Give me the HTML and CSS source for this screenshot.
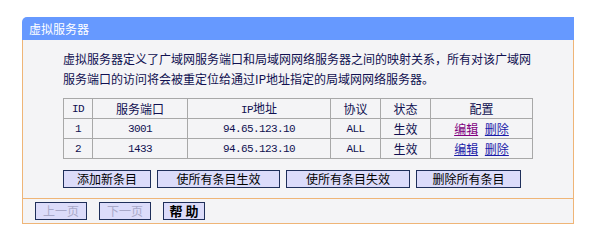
FILE: index.html
```html
<!DOCTYPE html>
<html lang="zh-CN">
<head>
<meta charset="utf-8">
<title>虚拟服务器</title>
<link rel="stylesheet" href="styles.css">
</head>
<body>
<div class="panel">
  <div class="panel-title">虚拟服务器</div>
  <div class="panel-body">
    <p class="intro">虚拟服务器定义了广域网服务端口和局域网网络服务器之间的映射关系，所有对该广域网服务端口的访问将会被重定位给通过IP地址指定的局域网网络服务器。</p>
    <table class="grid">
      <thead>
        <tr>
          <th class="c-id mono">ID</th>
          <th class="c-port">服务端口</th>
          <th class="c-ip"><span class="mono">IP</span>地址</th>
          <th class="c-proto">协议</th>
          <th class="c-state">状态</th>
          <th class="c-cfg">配置</th>
        </tr>
      </thead>
      <tbody>
        <tr>
          <td class="mono">1</td>
          <td class="mono">3001</td>
          <td class="mono">94.65.123.10</td>
          <td class="mono">ALL</td>
          <td>生效</td>
          <td><a class="visited" href="#">编辑</a> <a href="#">删除</a></td>
        </tr>
        <tr>
          <td class="mono">2</td>
          <td class="mono">1433</td>
          <td class="mono">94.65.123.10</td>
          <td class="mono">ALL</td>
          <td>生效</td>
          <td><a href="#">编辑</a> <a href="#">删除</a></td>
        </tr>
      </tbody>
    </table>
    <div class="actions">
      <button class="btn b1">添加新条目</button>
      <button class="btn b2">使所有条目生效</button>
      <button class="btn b3">使所有条目失效</button>
      <button class="btn b4">删除所有条目</button>
    </div>
  </div>
  <div class="panel-foot">
    <button class="btn nav" disabled>上一页</button>
    <button class="btn nav" disabled>下一页</button>
    <button class="btn help">帮 助</button>
  </div>
</div>
</body>
</html>
```

FILE: styles.css
```css
html, body {
  margin: 0;
  padding: 0;
  background: #ffffff;
}
body {
  padding: 17px 0 0 22px;
  font-family: "Noto Sans CJK SC", "Noto Sans", sans-serif;
  font-size: 12px;
  color: #101050;
}
.panel {
  width: 552px;
}
.panel-title {
  height: 23px;
  line-height: 23px;
  background: #6699ff;
  color: #ffffff;
  padding-left: 7px;
  border-top-left-radius: 5px;
  font-size: 12px;
}
.panel-body {
  background: #f4f4f6;
  border: 1px solid #efb577;
  border-top: none;
  padding: 9px 40px 10px 40px;
}
.intro {
  margin: 0;
  line-height: 20px;
  font-size: 12px;
}
.mono {
  font-family: "Liberation Mono", monospace;
  font-size: 11px;
  letter-spacing: -0.6px;
}
.grid {
  margin-top: 9px;
  width: 470px;
  border-collapse: collapse;
  border: 1px solid #8a8a8a;
  table-layout: fixed;
}
.grid tr {
  height: 20px;
}
.grid th, .grid td {
  border: 1px solid #a8a8a8;
  padding: 0;
  text-align: center;
  font-weight: normal;
  font-size: 12px;
  line-height: 16px;
}
.grid th.mono, .grid td.mono {
  font-size: 11px;
}
.c-id { width: 28px; }
.c-port { width: 94px; }
.c-ip { width: 142px; }
.c-proto { width: 49px; }
.c-state { width: 49px; }
.grid a {
  color: #1c1ca8;
  text-decoration: underline;
  margin: 0 2px;
}
.grid a.visited {
  color: #800080;
}
.actions {
  display: flex;
  gap: 6px;
  margin-top: 11px;
}
.btn {
  height: 18px;
  padding: 0;
  margin: 0;
  background: #dcdcfa;
  border: 1px solid #1f2f5a;
  color: #000000;
  font-family: "Noto Sans CJK SC", sans-serif;
  font-size: 12px;
  line-height: 16px;
}
.b1 { width: 88px; }
.b2 { width: 123px; }
.b3 { width: 124px; }
.b4 { width: 105px; }
.panel-foot {
  background: #f4f4f6;
  border: 1px solid #efb577;
  border-top: none;
  height: 24px;
  display: flex;
  align-items: center;
  gap: 12px;
  padding-left: 12px;
}
.btn.nav {
  width: 52px;
  color: #a8a8c8;
}
.btn.help {
  width: 42px;
  font-size: 13px;
  font-weight: bold;
  color: #000000;
}
```
